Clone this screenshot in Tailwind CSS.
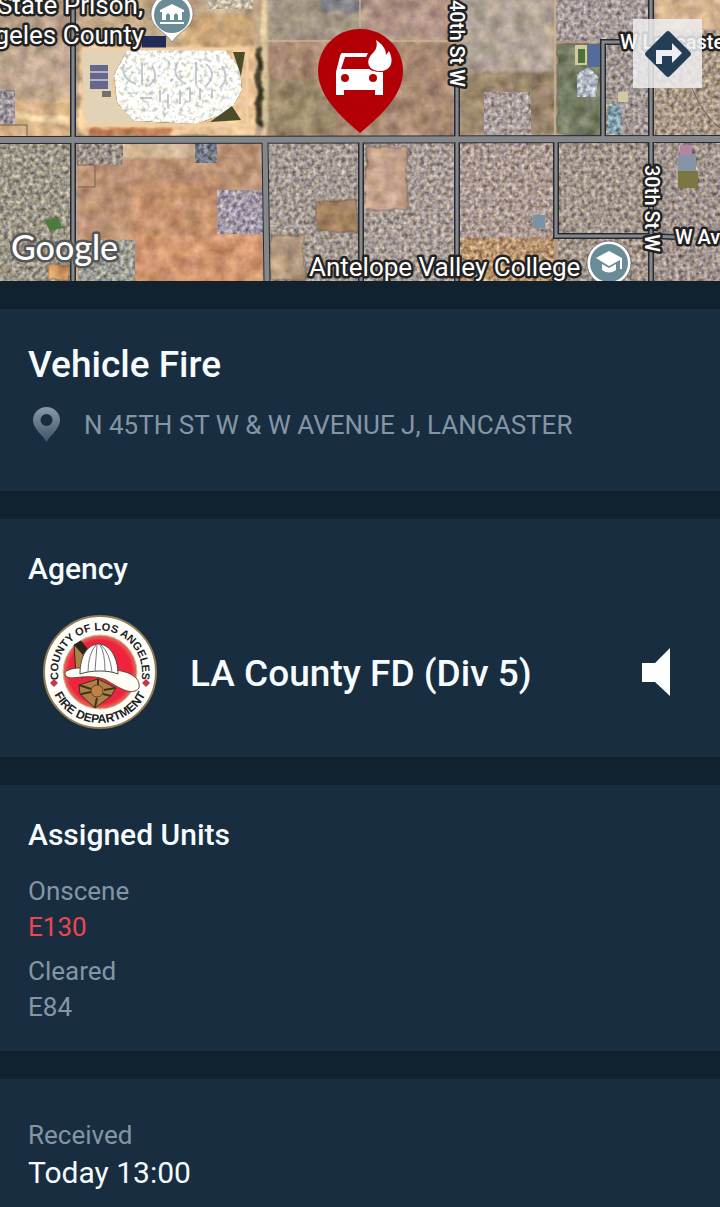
<!doctype html>
<html lang="en">
  <head>
    <meta charset="UTF-8" />
    <meta name="viewport" content="width=device-width, initial-scale=1.0" />
    <title>Vehicle Fire - LA County FD</title>
    <script src="https://cdn.jsdelivr.net/npm/@tailwindcss/browser@4"></script>
  </head>
  <body class="min-h-screen flex flex-col gap-7 bg-[#11212e] text-[#f5fbff] font-['Roboto',sans-serif]">
    <!-- Map -->
    <header class="relative h-[281px] overflow-hidden">
      <svg class="block w-full h-full" viewBox="0 0 720 281" preserveAspectRatio="xMidYMid slice" role="img" aria-label="Satellite map of Lancaster">
        <defs>
          <filter id="desert" x="0" y="0" width="100%" height="100%" color-interpolation-filters="sRGB">
            <feTurbulence type="fractalNoise" baseFrequency="0.07" numOctaves="4" seed="4" result="n" />
            <feDisplacementMap in="SourceGraphic" in2="n" scale="8" xChannelSelector="R" yChannelSelector="G" result="d" />
            <feGaussianBlur in="d" stdDeviation="1" result="b" />
            <feColorMatrix in="n" values="0.8 0.2 0 0 0  0.7 0.3 0 0 0  0.6 0.2 0.2 0 0  0 0 0 0 1" result="g" />
            <feComposite in="b" in2="g" operator="arithmetic" k1="0" k2="1" k3="0.45" k4="-0.17" result="c" />
            <feComposite in="c" in2="b" operator="in" />
          </filter>
          <filter id="houses" x="0" y="0" width="100%" height="100%" color-interpolation-filters="sRGB">
            <feTurbulence type="fractalNoise" baseFrequency="0.24" numOctaves="2" seed="9" result="n" />
            <feColorMatrix in="n" values="1.2 0.3 0 0 -0.25  1.2 0.2 0.1 0 -0.25  1.1 0 0.4 0 -0.25  0 0 0 0 1" result="g" />
            <feComposite in="SourceGraphic" in2="g" operator="arithmetic" k1="0" k2="1" k3="0.6" k4="-0.23" result="c" />
            <feComposite in="c" in2="SourceAlpha" operator="in" />
          </filter>
          <pattern id="streets" width="18" height="14" patternUnits="userSpaceOnUse">
            <path d="M0 2h18M4 2v12M11 2v7M11 9h7" fill="none" stroke="#c9beb6" stroke-opacity=".45" />
            <path d="M7 4v9M14 11v3M13 5h5" fill="none" stroke="#4a4647" stroke-opacity=".35" />
          </pattern>
        </defs>

        <!-- Open land -->
        <g filter="url(#desert)">
          <rect x="-20" y="-20" width="760" height="320" fill="#a58d76" />
          <rect x="-10" y="50" width="82" height="50" fill="#b39a83" />
          <rect x="-10" y="100" width="82" height="38" fill="#c8a379" />
          <path d="M15 112l55 6v6l-55-3z" fill="#e6c99c" />
          <rect x="77" y="-10" width="183" height="62" fill="#b39a7b" />
          <rect x="180" y="15" width="74" height="35" fill="#bd996c" />
          <rect x="79" y="46" width="177" height="90" fill="#dfb98b" />
          <rect x="88" y="128" width="84" height="8" fill="#b16e44" />
          <rect x="78" y="142" width="184" height="150" fill="#ae8467" />
          <rect x="130" y="180" width="88" height="105" fill="#b4825f" />
          <rect x="135" y="235" width="128" height="50" fill="#c38862" />
          <rect x="100" y="142" width="115" height="16" fill="#c6aa89" />
          <rect x="267" y="-10" width="93" height="50" fill="#978977" />
          <rect x="320" y="-10" width="40" height="22" fill="#77747c" />
          <rect x="267" y="42" width="185" height="94" fill="#9b7c65" />
          <rect x="267" y="80" width="70" height="54" fill="#8c7b5c" />
          <rect x="360" y="-10" width="92" height="48" fill="#a28578" />
          <rect x="460" y="-10" width="92" height="100" fill="#a5978a" />
          <rect x="460" y="72" width="95" height="62" fill="#8b775e" />
          <rect x="656" y="-10" width="80" height="40" fill="#c5a482" />
          <path d="M256 50h6v75h-6z" fill="#302b19" />
          <path d="M262 0h6v136h-6z" fill="#c8b28a" />
        </g>

        <!-- State prison -->
        <path d="M82 48h46l-8 14-9 22 8 24 20 14-20 4H90l-6-8z" fill="#e2d3b7" />
        <path d="M128 48h96l16 20 2 22-12 22-34 12-62-3-17-18-3-28z" fill="#e9eae2" filter="url(#houses)" />
        <g fill="none" stroke="#aab6bd" stroke-width="2" opacity=".7">
          <path d="M124 64q-4 14 12 20M142 62v22M152 66q8 12-4 20M178 62q-8 14 8 22M196 62v22M206 64q12 10 0 22M222 66q8 12-2 22" />
          <path d="M160 90v12M168 94v14M180 90v14M190 88v14M200 88v12M212 90v8M140 98h12" />
        </g>
        <path d="M142 36h24v13h-24z" fill="#222b58" />
        <path d="M90 65h18v24H90z" fill="#66678d" />
        <path d="M90 72h18M90 80h18" stroke="#b6b2c5" stroke-width="2" />
        <path d="M102 91h9v6h-9z" fill="#75706a" />
        <path d="M233 52h12l-4 24zM210 122l22-16 9 14z" fill="#4c4c2b" />
        <path d="M82 49h165v76H84" fill="none" stroke="#efd0a4" stroke-width="3" />

        <!-- Built-up blocks -->
        <g filter="url(#houses)">
          <path d="M0 142h71v139H0z" fill="#8b8577" />
          <path d="M0 90h15v34H0z" fill="#8a8289" />
          <path d="M77 143h46v22H77z" fill="#8b8078" />
          <path d="M78 240h57v41H78z" fill="#8b8b82" />
          <path d="M195 143h22v20h-22z" fill="#656975" />
          <path d="M217 190h46v44h-46z" fill="#918795" />
          <path d="M208 0h45v9h-45z" fill="#b1a692" />
          <path d="M269 142h90v139h-90z" fill="#928780" />
          <path d="M364 142h90v139h-90z" fill="#958983" />
          <path d="M460 142h94v96h-94z" fill="#998780" />
          <path d="M460 238h94v43h-94z" fill="#a6835e" />
          <path d="M558 142h90v139h-90z" fill="#908379" />
          <path d="M654 142h66v139h-66z" fill="#8e807a" />
          <path d="M556 0h92v41h-92z" fill="#938887" />
          <path d="M484 92h47v43h-47z" fill="#978b89" />
          <path d="M604 43h45v94h-45z" fill="#908581" />
          <path d="M655 30h65v106h-65z" fill="#978674" />
        </g>
        <path fill="url(#streets)" d="M269 142h90v139h-90zM364 142h90v139h-90zM460 142h94v96h-94zM558 142h90v95h-90zM654 142h66v139h-66zM556 0h92v40h-92zM484 92h47v43h-47zM604 82h45v54h-45zM655 90h65v46h-65z" />
        <g filter="url(#desert)">
          <path d="M365 146h42v64h-42z" fill="#b8957f" />
          <path d="M316 200h42v32h-42z" fill="#967553" />
          <path d="M270 236h35v45h-35z" fill="#a68d72" />
          <path d="M557 43h46v93h-46z" fill="#687056" />
          <path d="M48 264h22v17H48z" fill="#c58b54" />
        </g>
        <path d="M575 45h12v20h-12zM618 92h10v10h-10z" fill="#d2c9a2" />
        <path d="M578 49h7v14h-7z" fill="#4d713d" />
        <path d="M588 44h12v23h-12z" fill="#526c9c" />
        <path d="M577 73l12-6 10 10-3 20h-19z" fill="#a0a5af" filter="url(#houses)" />
        <path d="M608 105h13v28h-13z" fill="#6f8d98" filter="url(#houses)" />
        <path d="M678 155h18v17h-18z" fill="#8694a8" />
        <path d="M680 145h12v10h-12z" fill="#b285a1" />
        <path d="M678 171h20v17h-20z" fill="#7b7742" />
        <path d="M533 215h12v13h-12z" fill="#7993a3" />
        <path d="M44 220l15-2 3 10-12 3z" fill="#4e7b3d" />
        <path d="M555 0v136M267 41h185M360 0v28" fill="none" stroke="#cab79b" stroke-width="2" opacity=".7" />
        <path d="M77 165h18v22H78M0 125h27v11M692 88q10 26 28 40" fill="none" stroke="#6e6257" stroke-width="1" />

        <!-- Roads: dark casing below a grey centre -->
        <g fill="none" stroke="#262b31" stroke-width="6">
          <path d="M73 0v281M361 141v140M457 85v196M651 0v281M603 139V42h20M556 141v95h94l25 1" />
          <path d="M265 141l2 140" stroke-width="7" />
          <path d="M0 140l720-1" stroke-width="8" />
        </g>
        <g fill="none" stroke="#85878a" stroke-width="3">
          <path d="M73 0v281M361 141v140M457 85v196M651 0v281M603 139V42h20M556 141v95h94l25 1" />
          <path d="M265 141l2 140" stroke-width="5" />
          <path d="M0 140l720-1" stroke-width="6" />
        </g>

        <!-- Labels -->
        <g class="font-['Roboto',sans-serif]" fill="#fff" stroke="#222" stroke-width="5" stroke-linejoin="round" paint-order="stroke" font-size="26">
          <text x="143" y="14" text-anchor="end">State Prison,</text>
          <text x="144" y="44" text-anchor="end">geles County</text>
          <text x="309" y="276">Antelope Valley College</text>
          <g font-size="20" font-weight="500">
            <text transform="translate(450 0) rotate(90)">40th St W</text>
            <text transform="translate(645 165) rotate(90)">30th St W</text>
            <text x="620" y="49">W Lancaster</text>
            <text x="675" y="244">W Av</text>
          </g>
        </g>
        <text x="11" y="260" class="font-['Lato',sans-serif]" font-size="34" font-weight="500" fill="#fff" stroke="#555" stroke-width="5" stroke-linejoin="round" paint-order="stroke">Google</text>

        <!-- Museum pin -->
        <path d="M172-7a21 21 0 0 1 21 21c0 14-14 17-21 28-7-11-21-14-21-28a21 21 0 0 1 21-21z" fill="#fff" stroke="#555" stroke-opacity=".5" />
        <circle cx="172" cy="15" r="18" fill="#6a8c97" />
        <path d="M160 10l12-6 12 6v2h-2v8h-4v-5l-2-2-2 2v5h-4v-5l-2-2-2 2v5h-4v-8h-2zM160 22h24v2h-24z" fill="#fff" />

        <!-- College pin -->
        <circle cx="609" cy="263" r="22" fill="#fff" stroke="#444" stroke-opacity=".6" />
        <circle cx="609" cy="263" r="19" fill="#6a8c97" />
        <path d="M609 251l13 7v11h-2v-9l-11 6-13-8z" fill="#fff" />
        <path d="M602 264l7 4 7-4v6q-7 5-14 0z" fill="#fff" />

        <!-- Incident pin -->
        <path d="M360 29c24 0 43 19 43 42 0 25-24 46-43 62-19-16-42-37-42-62 0-23 18-42 42-42z" fill="#b30006" />
        <path fill="#fff" fill-rule="evenodd" d="M342 53h26l-2 4h-21l-4 12h28c4 3 11 3 14 0v26h-8v-5h-31v5h-8V72l4-16q1-3 2-3zM345 74a4 4 0 1 0 0 8 4 4 0 0 0 0-8zM373 74a4 4 0 1 0 0 8 4 4 0 0 0 0-8z" />
        <path fill="#fff" stroke="#b30006" stroke-width="2" paint-order="stroke" d="M376 40c7 5 10 9 10 15l3-4c6 12 1 20-9 20-12 0-15-10-8-17 4-4 6-8 4-14z" />
      </svg>
      <button type="button" aria-label="Directions" class="absolute top-[19px] right-[18px] size-[69px] bg-[#eeeff0]/85 flex items-center justify-center">
        <svg class="size-12" viewBox="0 0 48 48">
          <path d="M22 2q2-2 4 0l20 20q2 2 0 4L26 46q-2 2-4 0L2 26q-2-2 0-4z" fill="#243e55" />
          <path d="M12 34V20h16v-7l10 10-10 10v-7H18v8z" fill="#eceef0" />
        </svg>
      </button>
    </header>

    <main class="flex-1 flex flex-col gap-7">
      <section class="bg-[#182d40] px-7 pt-[34px] pb-12">
        <h1 class="text-[37px] leading-11 font-medium">Vehicle Fire</h1>
        <p class="mt-5 flex items-center text-[26px] leading-9 text-[#8496a5]">
          <svg class="w-9 h-9 mr-5 shrink-0" viewBox="0 0 36 36" aria-hidden="true">
            <defs>
              <linearGradient id="pin" x2="0" y2="1">
                <stop offset="0" stop-color="#8999a8" />
                <stop offset="1" stop-color="#3d5368" />
              </linearGradient>
            </defs>
            <path fill="url(#pin)" fill-rule="evenodd" d="M18.500 0C11 0 5 6 5 13c0 9 9 14 13.500 22C23 27 32 22 32 13 32 6 26 0 18.500 0zm0 7a6 6 0 1 1 0 12 6 6 0 0 1 0-12z" />
          </svg>
          N 45TH ST W &amp; W AVENUE J, LANCASTER
        </p>
      </section>

      <section class="bg-[#182d40] px-7 pt-[30px] pb-[27px]">
        <h2 class="text-[30px] leading-10 font-medium">Agency</h2>
        <div class="mt-[25px] pl-3.5 pr-[22px] flex items-center">
          <svg class="size-[116px] shrink-0" viewBox="0 0 116 116" role="img" aria-label="County of Los Angeles Fire Department seal">
            <defs>
              <radialGradient id="red">
                <stop offset=".85" stop-color="#ef233d" />
                <stop offset="1" stop-color="#dc755d" />
              </radialGradient>
              <path id="seal-top" d="M22 80a42 42 0 1 1 72 0" />
              <path id="seal-bottom" d="M7 58a51 51 0 0 0 102 0" />
            </defs>
            <circle cx="58" cy="58" r="56" fill="#fffefa" stroke="#927c50" stroke-width="2" />
            <circle cx="58" cy="58" r="37" fill="url(#red)" stroke="#d8b891" />
            <g class="font-['Liberation_Sans',sans-serif]" font-weight="700" fill="#222" text-anchor="middle">
              <text font-size="11"><textPath href="#seal-top" startOffset="50%">COUNTY OF LOS ANGELES</textPath></text>
              <text font-size="12"><textPath href="#seal-bottom" startOffset="50%">FIRE DEPARTMENT</textPath></text>
            </g>
            <path d="M12 65l4 4-4 4-4-4zM104 65l4 4-4 4-4-4z" fill="#c43548" />
            <path d="M32 31l7-4 8 10-6 27-7-3z" fill="#ab8242" stroke="#33281e" />
            <path d="M32 31l7-4 7 9-5 5z" fill="#29231e" />
            <path d="M24 57q10-5 22-2l26 1c14 1 27 7 25 18-7 9-21-1-33-8-10-5-25-3-34-2-5 0-9-3-6-7z" fill="#fffdf3" stroke="#594a3c" />
            <path d="M38 60c0-18 7-29 18-30 13 0 20 15 20 30-9-4-27-4-38 0z" fill="#fff" stroke="#4b4640" />
            <path d="M46 58q0-18 8-27M53 57l2-26M63 57q0-18-5-26M70 58q-2-19-11-27" fill="none" stroke="#777" />
            <path d="M37 71l19-6 18 9-5 8-16 12-15-14z" fill="#ad8145" stroke="#40301d" />
            <path d="M37 71l12 4M73 74l-11 2M53 93l2-9M39 80l10-2M56 65v6M69 82l-8-2" stroke="#40301d" stroke-width="2" />
            <circle cx="55" cy="77" r="6" fill="#c18145" stroke="#604326" />
          </svg>
          <h3 class="ml-8 mt-1 flex-1 text-[37px] leading-11 font-medium">LA County FD (Div 5)</h3>
          <button type="button" aria-label="Listen" class="shrink-0">
            <svg class="w-7 h-12" viewBox="0 0 28 48"><path d="M0 15h13L28 0v48L13 34H0z" fill="#fff" /></svg>
          </button>
        </div>
      </section>

      <section class="bg-[#182d40] px-7 pt-[30px] pb-[26px]">
        <h2 class="text-[30px] leading-10 font-medium">Assigned Units</h2>
        <dl class="mt-[18px] flex flex-col gap-2 text-[26px] leading-9 text-[#8496a5]">
          <div>
            <dt>Onscene</dt>
            <dd class="text-[#ec4650]">E130</dd>
          </div>
          <div>
            <dt>Cleared</dt>
            <dd>E84</dd>
          </div>
        </dl>
      </section>

      <section class="flex-1 bg-[#182d40] px-7 pt-[38px] pb-3.5">
        <dl>
          <dt class="text-[26px] leading-9 text-[#8496a5]">Received</dt>
          <dd class="text-[30px] leading-10">Today 13:00</dd>
        </dl>
      </section>
    </main>
  </body>
</html>
